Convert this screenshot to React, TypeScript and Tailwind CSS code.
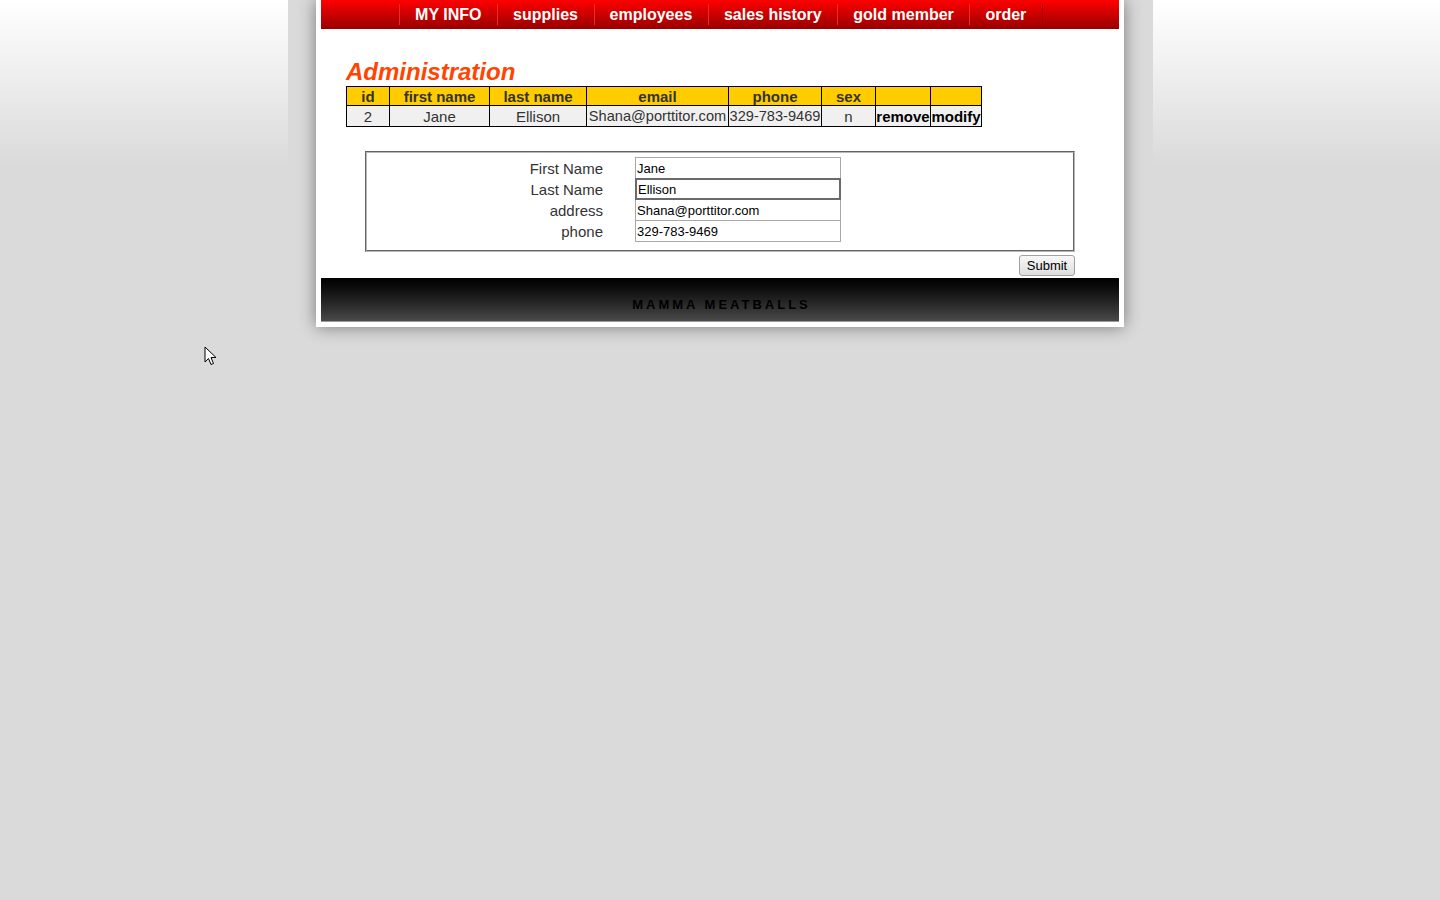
import React from "react";

const navItems = ["MY INFO", "supplies", "employees", "sales history", "gold member", "order"];

const columns = [
  { label: "id", width: 43 },
  { label: "first name", width: 100 },
  { label: "last name", width: 97 },
  { label: "email", width: 142 },
  { label: "phone", width: 93 },
  { label: "sex", width: 54 },
  { label: "", width: 55 },
  { label: "", width: 51 },
];

const fields = [
  { label: "First Name", value: "Jane" },
  { label: "Last Name", value: "Ellison", focused: true },
  { label: "address", value: "Shana@porttitor.com" },
  { label: "phone", value: "329-783-9469" },
];

const font = { fontFamily: '"Liberation Sans", Arial, sans-serif' };

export default function App() {
  return (
    <div
      className="relative min-h-screen bg-[linear-gradient(to_bottom,#ffffff_0px,#dadada_165px,#dadada_100%)] text-[#333]"
      style={font}
    >
      <div className="mx-auto w-[865px] min-h-screen bg-[#dadada]">
        <div className="mx-auto w-[808px] bg-white px-[5px] pb-[5px] shadow-[0_0_16px_rgba(0,0,0,0.45)]">
          {/* Top nav */}
          <nav className="h-[29px] bg-gradient-to-b from-[#ff0000] to-[#990000] flex justify-center items-center">
            <ul className="flex items-center border-r border-[#a00000] ml-[2px]">
              {navItems.map((item) => (
                <li
                  key={item}
                  className="h-[21px] flex items-center border-l border-[#f02a2a] pl-[15px] pr-[15.6px] text-[16px] font-bold text-white leading-none"
                >
                  {item}
                </li>
              ))}
            </ul>
          </nav>

          <div className="px-[25px]">
            <h1 className="mt-[29px] text-[24px] leading-[28px] font-bold italic text-[#ff4500]">
              Administration
            </h1>

            {/* Employee table */}
            <table className="table-fixed border-collapse w-[635px] text-[15px]">
              <colgroup>
                {columns.map((c, i) => (
                  <col key={i} style={{ width: c.width }} />
                ))}
              </colgroup>
              <thead>
                <tr className="bg-[#ffcc00]">
                  {columns.map((c, i) => (
                    <th
                      key={i}
                      className="h-[19px] p-0 border border-black font-bold text-[#333] text-center leading-[17px]"
                    >
                      {c.label}
                    </th>
                  ))}
                </tr>
              </thead>
              <tbody>
                <tr className="bg-[#f0f0f0]">
                  {["2", "Jane", "Ellison", "Shana@porttitor.com", "329-783-9469", "n"].map((v, i) => (
                    <td
                      key={i}
                      className={`h-[21px] p-0 border border-black text-center whitespace-nowrap leading-[19px] ${
                        i === 3 || i === 4 ? "text-[14.6px]" : ""
                      }`}
                    >
                      {v}
                    </td>
                  ))}
                  <td className="h-[21px] p-0 border border-black text-center font-bold text-black leading-[19px]">
                    remove
                  </td>
                  <td className="h-[21px] p-0 border border-black text-center font-bold text-black leading-[19px]">
                    modify
                  </td>
                </tr>
              </tbody>
            </table>
          </div>

          {/* Edit form */}
          <div className="mx-auto mt-[24px] w-[710px]">
            <div className="border-2 [border-style:groove] border-[#b8b8b8] pt-[4px] pb-[8px]">
              {fields.map((f, i) => (
                <div key={f.label} className={`flex items-center h-[22px] ${i > 0 ? "-mt-px" : ""}`}>
                  <div className="w-[236px] text-right text-[15px] leading-[21px] text-[#333]">
                    {f.label}
                  </div>
                  <input
                    readOnly
                    value={f.value}
                    style={font}
                    className={`relative ml-[32px] w-[206px] h-[22px] px-[1px] text-[13px] text-black bg-white outline-none ${
                      f.focused ? "z-10 border-2 border-[#6a6a6a]" : "border border-[#a9a9a9]"
                    }`}
                  />
                </div>
              ))}
            </div>
            <div className="flex justify-end mt-[3px]">
              <button
                type="button"
                style={font}
                className="h-[21px] w-[56px] rounded-[3px] border border-[#a0a0a0] bg-gradient-to-b from-[#f8f8f8] to-[#dddddd] text-[13px] text-black leading-none"
              >
                Submit
              </button>
            </div>
          </div>

          {/* Footer */}
          <footer className="mt-[2px] h-[44px] bg-gradient-to-b from-[#020202] to-[#4a4a4a] border-b border-[#9a9a9a] flex justify-center pt-[20px]">
            <span className="text-[13px] font-bold tracking-[3px] text-black leading-none pl-[3px]">
              MAMMA MEATBALLS
            </span>
          </footer>
        </div>
      </div>

      {/* mouse pointer */}
      <svg
        className="absolute left-[204px] top-[346px]"
        width="14"
        height="20"
        viewBox="0 0 14 20"
      >
        <path
          d="M1 1 L1 16 L4.5 12.5 L7 18.5 L9.5 17.5 L7 11.5 L12 11.5 Z"
          fill="white"
          stroke="black"
          strokeWidth="1"
          strokeLinejoin="miter"
        />
      </svg>
    </div>
  );
}
